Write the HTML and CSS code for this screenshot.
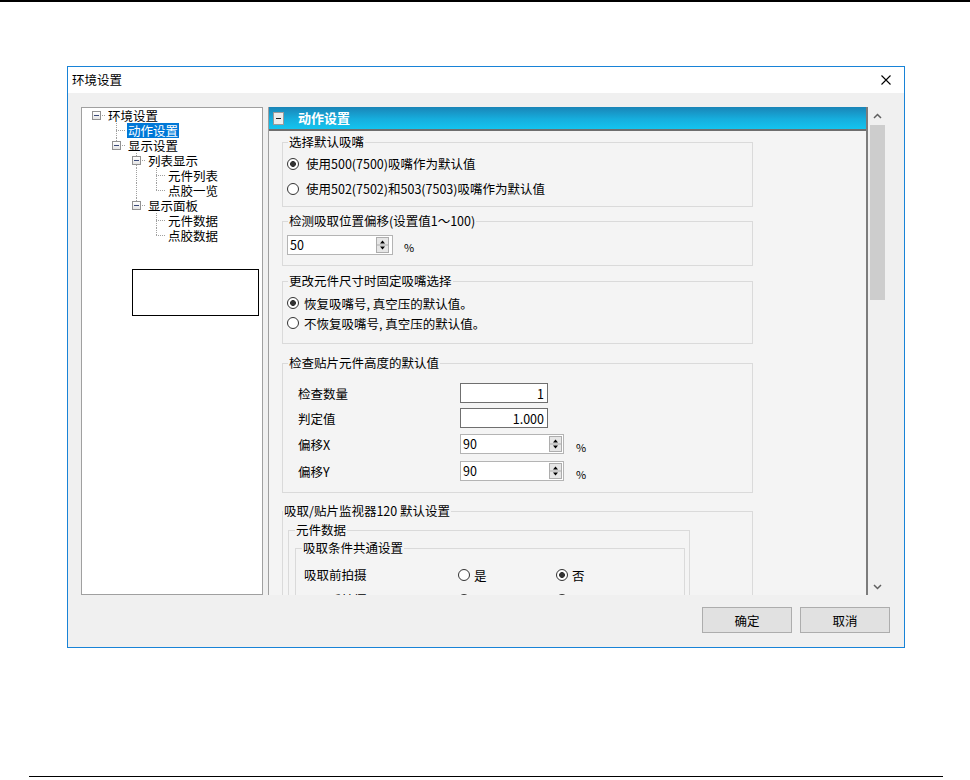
FILE: index.html
```html
<!DOCTYPE html>
<html lang="zh-CN">
  <head>
    <meta charset="UTF-8" />
    <title>环境设置</title>
    <link rel="stylesheet" href="styles.css">
  </head>
  <body>
    <div class="pageTop"></div>

    <div class="dialog">
      <div class="titleBar">
        <span class="titleText">环境设置</span>
        <svg class="closeBtn" width="10" height="10" viewBox="0 0 10 10">
          <path d="M0.5 0.5L9.5 9.5M9.5 0.5L0.5 9.5" stroke="#000" stroke-width="1.1" fill="none" />
        </svg>
      </div>

      <div class="dialogBody">
        <div class="mainRow">
          <!-- left tree -->
          <div class="treePanel">
            <div class="treeRow">
              <span class="cell root"><i class="knob"></i></span><span class="label">环境设置</span>
            </div>
            <div class="treeRow">
              <span class="cell"></span><span class="cell tee"></span><span class="label selected">动作设置</span>
            </div>
            <div class="treeRow">
              <span class="cell"></span><span class="cell ell"><i class="knob"></i></span><span class="label">显示设置</span>
            </div>
            <div class="treeRow">
              <span class="cell"></span><span class="cell"></span><span class="cell tee"><i class="knob"></i></span><span class="label">列表显示</span>
            </div>
            <div class="treeRow">
              <span class="cell"></span><span class="cell"></span><span class="cell pass"></span><span class="cell tee"></span><span class="label">元件列表</span>
            </div>
            <div class="treeRow">
              <span class="cell"></span><span class="cell"></span><span class="cell pass"></span><span class="cell ell"></span><span class="label">点胶一览</span>
            </div>
            <div class="treeRow">
              <span class="cell"></span><span class="cell"></span><span class="cell ell"><i class="knob"></i></span><span class="label">显示面板</span>
            </div>
            <div class="treeRow">
              <span class="cell"></span><span class="cell"></span><span class="cell"></span><span class="cell tee"></span><span class="label">元件数据</span>
            </div>
            <div class="treeRow">
              <span class="cell"></span><span class="cell"></span><span class="cell"></span><span class="cell ell"></span><span class="label">点胶数据</span>
            </div>
            <div class="treeBox"></div>
          </div>

          <!-- right settings -->
          <div class="settingPanel">
            <div class="settingCol">
              <div class="settingHead">
                <span class="headKnob"></span>
                <span class="headTitle">动作设置</span>
              </div>
              <div class="settingBody">

                <fieldset class="grp grpNozzle">
                  <legend>选择默认吸嘴</legend>
                  <div class="radioList">
                    <label class="radioRow"><input type="radio" class="radio" name="nz" checked>使用500(7500)吸嘴作为默认值</label>
                    <label class="radioRow"><input type="radio" class="radio" name="nz">使用502(7502)和503(7503)吸嘴作为默认值</label>
                  </div>
                </fieldset>

                <fieldset class="grp grpOffset">
                  <legend>检测吸取位置偏移(设置值1～100)</legend>
                  <div class="spinLine">
                    <div class="spinBox">
                      <span class="spinVal">50</span>
                      <svg class="spinBtn" width="13" height="16" viewBox="0 0 13 16">
                        <rect x="0.5" y="0.5" width="12" height="15" fill="#e6e6e6" stroke="#adadad" />
                        <line x1="1" y1="8" x2="12" y2="8" stroke="#adadad" />
                        <path d="M4 6.5h5L6.5 3.5z" fill="#000" />
                        <path d="M4 9.5h5L6.5 12.5z" fill="#000" />
                      </svg>
                    </div>
                    <span class="unit">%</span>
                  </div>
                </fieldset>

                <fieldset class="grp grpFix">
                  <legend>更改元件尺寸时固定吸嘴选择</legend>
                  <div class="radioList tight">
                    <label class="radioRow"><input type="radio" class="radio" name="fx" checked>恢复吸嘴号, 真空压的默认值。</label>
                    <label class="radioRow"><input type="radio" class="radio" name="fx">不恢复吸嘴号, 真空压的默认值。</label>
                  </div>
                </fieldset>

                <fieldset class="grp grpHeight">
                  <legend>检查贴片元件高度的默认值</legend>
                  <div class="numGrid">
                    <span>检查数量</span>
                    <input class="numInput" value="1">
                    <span></span>

                    <span>判定值</span>
                    <input class="numInput" value="1.000">
                    <span></span>

                    <span>偏移X</span>
                    <div class="spinBox wide">
                      <span class="spinVal">90</span>
                      <svg class="spinBtn" width="13" height="16" viewBox="0 0 13 16">
                        <rect x="0.5" y="0.5" width="12" height="15" fill="#e6e6e6" stroke="#adadad" />
                        <line x1="1" y1="8" x2="12" y2="8" stroke="#adadad" />
                        <path d="M4 6.5h5L6.5 3.5z" fill="#000" />
                        <path d="M4 9.5h5L6.5 12.5z" fill="#000" />
                      </svg>
                    </div>
                    <span class="unit">%</span>

                    <span>偏移Y</span>
                    <div class="spinBox wide">
                      <span class="spinVal">90</span>
                      <svg class="spinBtn" width="13" height="16" viewBox="0 0 13 16">
                        <rect x="0.5" y="0.5" width="12" height="15" fill="#e6e6e6" stroke="#adadad" />
                        <line x1="1" y1="8" x2="12" y2="8" stroke="#adadad" />
                        <path d="M4 6.5h5L6.5 3.5z" fill="#000" />
                        <path d="M4 9.5h5L6.5 12.5z" fill="#000" />
                      </svg>
                    </div>
                    <span class="unit">%</span>
                  </div>
                </fieldset>

                <fieldset class="grp grpMonitor">
                  <legend>吸取/贴片监视器120 默认设置</legend>
                  <fieldset class="subGrp">
                    <legend>元件数据</legend>
                    <fieldset class="subGrp2">
                      <legend>吸取条件共通设置</legend>
                      <div class="switchList">
                        <div class="switchRow">
                          <span>吸取前拍摄</span>
                          <label class="opt"><input type="radio" class="radio" name="s1">是</label>
                          <label class="opt"><input type="radio" class="radio" name="s1" checked>否</label>
                        </div>
                        <div class="switchRow">
                          <span>吸取后拍摄</span>
                          <label class="opt"><input type="radio" class="radio" name="s2">是</label>
                          <label class="opt"><input type="radio" class="radio" name="s2" checked>否</label>
                        </div>
                        <div class="switchRow">
                          <span>贴片前拍摄</span>
                          <label class="opt"><input type="radio" class="radio" name="s3">是</label>
                          <label class="opt"><input type="radio" class="radio" name="s3" checked>否</label>
                        </div>
                      </div>
                    </fieldset>
                  </fieldset>
                </fieldset>

              </div>
            </div>
            <div class="scrollBar">
              <div class="scrollBtn">
                <svg width="9" height="6" viewBox="0 0 9 6"><path d="M1 5L4.5 1.5L8 5" stroke="#606060" stroke-width="1.5" fill="none" /></svg>
              </div>
              <div class="scrollThumb"></div>
              <div class="scrollTrack"></div>
              <div class="scrollBtn">
                <svg width="9" height="6" viewBox="0 0 9 6"><path d="M1 1L4.5 4.5L8 1" stroke="#606060" stroke-width="1.5" fill="none" /></svg>
              </div>
            </div>
          </div>
        </div>

        <div class="footer">
          <button class="btn">确定</button>
          <button class="btn">取消</button>
        </div>
      </div>
    </div>

    <div class="pageBottom"></div>
  </body>
</html>
```

FILE: styles.css
```css
body {
  margin: 0;
  background: #fff;
  font-family: "Noto Sans CJK SC", sans-serif;
  font-size: 12.5px;
  color: #000;
}
.pageTop {
  height: 2px;
  background: #000;
}
.pageBottom {
  margin: 128px 0 0 29px;
  width: 914px;
  height: 1px;
  background: #000;
}

/* dialog frame */
.dialog {
  margin: 64px 0 0 67px;
  width: 838px;
  height: 582px;
  box-sizing: border-box;
  border: 1px solid #1883d7;
  background: #f0f0f0;
  display: flex;
  flex-direction: column;
}
.titleBar {
  height: 26px;
  flex: none;
  background: #fff;
  display: flex;
  align-items: center;
  justify-content: space-between;
  padding: 0 13px 0 4px;
}
.titleText {
  line-height: 16px;
}
.dialogBody {
  flex: 1;
  padding: 14px 14px 0 13px;
  display: flex;
  flex-direction: column;
}
.mainRow {
  display: flex;
  gap: 5px;
  height: 488px;
  margin-right: 4px;
}

/* tree */
.treePanel {
  width: 182px;
  flex: none;
  box-sizing: border-box;
  border: 1px solid #a0a0a0;
  background: #fff;
  padding-left: 4px;
}
.treeRow {
  display: flex;
  height: 15px;
  align-items: center;
}
.cell {
  width: 20px;
  height: 15px;
  flex: none;
  display: flex;
  align-items: center;
  justify-content: center;
  background-repeat: no-repeat;
}
.cell.root {
  background-image: repeating-linear-gradient(to right, #a0a0a0 0 1px, transparent 1px 2px);
  background-position: 10px 7px;
  background-size: 10px 1px;
}
.cell.tee {
  background-image:
    repeating-linear-gradient(to bottom, #a0a0a0 0 1px, transparent 1px 2px),
    repeating-linear-gradient(to right, #a0a0a0 0 1px, transparent 1px 2px);
  background-position: 10px 0, 10px 7px;
  background-size: 1px 15px, 10px 1px;
}
.cell.ell {
  background-image:
    repeating-linear-gradient(to bottom, #a0a0a0 0 1px, transparent 1px 2px),
    repeating-linear-gradient(to right, #a0a0a0 0 1px, transparent 1px 2px);
  background-position: 10px 0, 10px 7px;
  background-size: 1px 8px, 10px 1px;
}
.cell.pass {
  background-image: repeating-linear-gradient(to bottom, #a0a0a0 0 1px, transparent 1px 2px);
  background-position: 10px 0;
  background-size: 1px 15px;
}
.knob {
  width: 9px;
  height: 9px;
  box-sizing: border-box;
  border: 1px solid #919191;
  background: linear-gradient(#3a4a7a, #3a4a7a) center / 5px 1px no-repeat, linear-gradient(#fff, #e4e4e4);
  margin-left: 1px;
}
.label {
  margin-left: 1px;
  padding: 0 1px;
  line-height: 15px;
  white-space: nowrap;
}
.label.selected {
  background: #0078d7;
  color: #fff;
}
.treeBox {
  margin: 26px 0 0 46px;
  width: 127px;
  height: 47px;
  box-sizing: border-box;
  border: 1px solid #000;
  background: #fff;
}

/* settings panel */
.settingPanel {
  flex: 1;
  display: flex;
  min-width: 0;
}
.settingCol {
  flex: 1;
  min-width: 0;
  display: flex;
  flex-direction: column;
  border-left: 1px solid #a0a0a0;
  border-right: 2px solid #7c7c7c;
}
.settingHead {
  height: 22px;
  flex: none;
  border-bottom: 2px solid #6e6e6e;
  background: linear-gradient(#1a84b7, #16aedd 55%, #14c4ef);
  display: flex;
  align-items: center;
}
.headKnob {
  width: 11px;
  height: 13px;
  margin-left: 4px;
  box-sizing: border-box;
  border: 1px solid #9a9a9a;
  background: linear-gradient(#222, #222) center / 5px 1px no-repeat, #ececec;
}
.headTitle {
  margin-left: 14px;
  color: #fff;
  font-weight: bold;
  font-size: 13px;
  line-height: 16px;
}
.settingBody {
  flex: 1;
  overflow: hidden;
  background: #f4f4f4;
  padding: 3px 0 0 13px;
}

/* group boxes */
fieldset {
  margin: 0;
  padding: 0;
  border: 1px solid #dadada;
  box-sizing: border-box;
  min-width: 0;
}
legend {
  padding: 0 1px;
  margin-left: 5px;
  line-height: 16px;
}
.grp {
  width: 471px;
}
.grpOffset {
  margin-top: 6px;
}
.grpFix {
  margin-top: 7px;
}
.grpHeight {
  margin-top: 11px;
}
.grpMonitor {
  margin-top: 10px;
  height: 200px;
}
.grpMonitor > legend {
  margin-left: 0;
}

.radio {
  appearance: none;
  -webkit-appearance: none;
  margin: 0;
  width: 12px;
  height: 12px;
  flex: none;
  box-sizing: border-box;
  border: 1px solid #333;
  border-radius: 50%;
  background: #fff;
}
.radio:checked {
  background: radial-gradient(circle, #333 0 2.6px, #fff 3.2px);
}
.radioList {
  padding: 1px 0 5px 4px;
}
.radioRow {
  height: 25px;
  display: flex;
  align-items: center;
  gap: 7px;
}
.radioList.tight {
  padding: 4px 0 10px 4px;
}
.radioList.tight .radioRow {
  height: 20px;
  gap: 5px;
}

.spinLine {
  display: flex;
  align-items: center;
  padding: 6px 0 10px 4px;
}
.spinBox {
  width: 106px;
  height: 20px;
  box-sizing: border-box;
  border: 1px solid #b4b4b4;
  background: #fff;
  display: flex;
  align-items: center;
  justify-content: space-between;
  padding: 0 3px 0 2px;
}
.spinBox.wide {
  width: 104px;
  padding-right: 1px;
}
.spinVal {
  line-height: 16px;
}
.spinBtn {
  display: block;
}
.unit {
  margin: 4px 0 0 11px;
  font-size: 11px;
}

.numGrid {
  display: grid;
  grid-template-columns: 162px auto auto;
  row-gap: 5px;
  align-items: center;
  justify-content: start;
  padding: 12px 0 10px 15px;
}
.numInput {
  width: 88px;
  height: 20px;
  box-sizing: border-box;
  border: 1px solid #6f6f6f;
  background: #fff;
  font: inherit;
  text-align: right;
  padding: 0 3px;
}
.numGrid .unit {
  margin: 6px 0 0 12px;
}

.subGrp {
  margin: 3px 0 0 5px;
  width: 402px;
  height: 200px;
}
.subGrp > legend,
.subGrp2 > legend {
  margin-left: 6px;
}
.subGrp2 {
  margin: 2px 0 0 6px;
  width: 390px;
  height: 200px;
}
.switchList {
  padding: 9px 0 0 8px;
}
.switchRow {
  display: grid;
  grid-template-columns: 154px 98px auto;
  height: 25px;
  align-items: start;
}
.switchRow span {
  line-height: 20px;
}
.opt {
  display: flex;
  align-items: center;
  gap: 4px;
  height: 20px;
}

/* scrollbar */
.scrollBar {
  width: 18px;
  flex: none;
  display: flex;
  flex-direction: column;
  background: #f0f0f0;
}
.scrollBtn {
  height: 17px;
  display: flex;
  align-items: center;
  justify-content: center;
}
.scrollThumb {
  height: 175px;
  margin: 1px 1px 0 2px;
  background: #cdcdcd;
}
.scrollTrack {
  flex: 1;
}

/* buttons */
.footer {
  display: flex;
  justify-content: flex-end;
  gap: 8px;
  margin-top: 12px;
}
.btn {
  width: 90px;
  height: 26px;
  border: 1px solid #adadad;
  background: #e1e1e1;
  font: inherit;
  color: #000;
  padding: 0;
}
```
